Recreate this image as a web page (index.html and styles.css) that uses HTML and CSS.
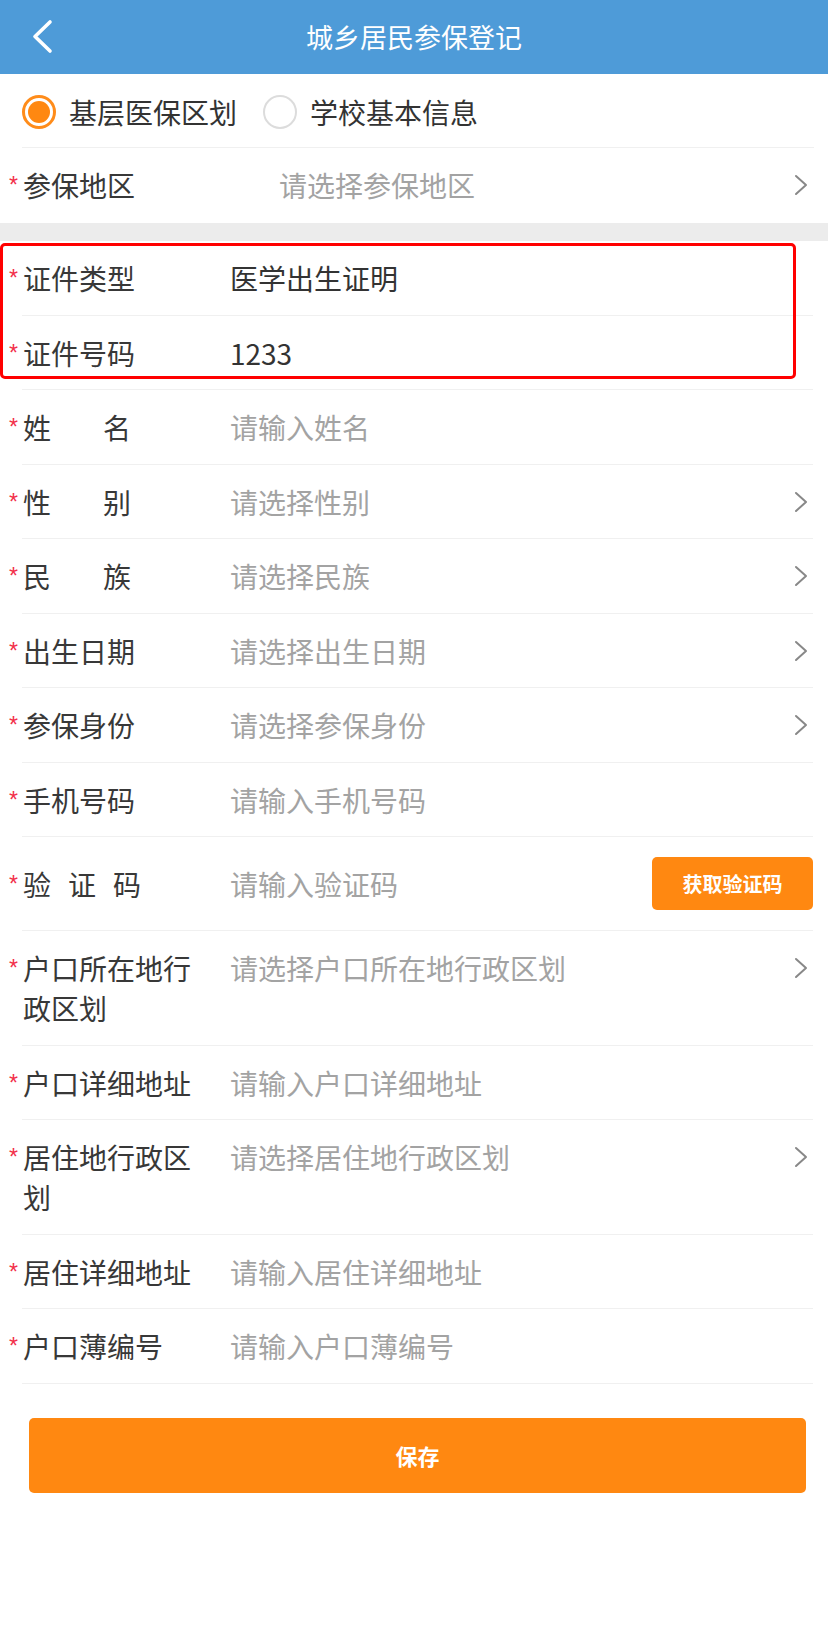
FILE: index.html
```html
<!DOCTYPE html>
<html lang="zh-CN">
<head>
<meta charset="utf-8">
<title>城乡居民参保登记</title>
<link rel="stylesheet" href="styles.css">
</head>
<body>
<header class="topbar">
  <div class="back">
    <svg width="26" height="38" viewBox="0 0 26 38"><path d="M20 4 L5 18.5 L20 33" fill="none" stroke="#fff" stroke-width="3.6" stroke-linecap="round" stroke-linejoin="round"/></svg>
  </div>
  <h1 class="title">城乡居民参保登记</h1>
  <div class="spacer"></div>
</header>

<section class="group">
  <div class="radio-row">
    <label class="radio checked"><span class="dot"></span><span class="rtext">基层医保区划</span></label>
    <label class="radio"><span class="dot"></span><span class="rtext">学校基本信息</span></label>
  </div>
  <div class="cell cell-area">
    <span class="req">*</span>
    <span class="label label-wide">参保地区</span>
    <span class="value ph">请选择参保地区</span>
    <svg class="arrow" width="16" height="24" viewBox="0 0 16 24"><path d="M3 3 L13 12 L3 21" fill="none" stroke="#888" stroke-width="2" stroke-linecap="round" stroke-linejoin="round"/></svg>
  </div>
</section>

<div class="band"></div>

<section class="group form">
  <div class="annot"></div>
  <div class="cell">
    <span class="req">*</span><span class="label">证件类型</span>
    <span class="value">医学出生证明</span>
  </div>
  <div class="cell">
    <span class="req">*</span><span class="label">证件号码</span>
    <span class="value">1233</span>
  </div>
  <div class="cell">
    <span class="req">*</span><span class="label"><span>姓</span><span class="gap2">名</span></span>
    <span class="value ph">请输入姓名</span>
  </div>
  <div class="cell">
    <span class="req">*</span><span class="label"><span>性</span><span class="gap2">别</span></span>
    <span class="value ph">请选择性别</span>
    <svg class="arrow" width="16" height="24" viewBox="0 0 16 24"><path d="M3 3 L13 12 L3 21" fill="none" stroke="#888" stroke-width="2" stroke-linecap="round" stroke-linejoin="round"/></svg>
  </div>
  <div class="cell">
    <span class="req">*</span><span class="label"><span>民</span><span class="gap2">族</span></span>
    <span class="value ph">请选择民族</span>
    <svg class="arrow" width="16" height="24" viewBox="0 0 16 24"><path d="M3 3 L13 12 L3 21" fill="none" stroke="#888" stroke-width="2" stroke-linecap="round" stroke-linejoin="round"/></svg>
  </div>
  <div class="cell">
    <span class="req">*</span><span class="label">出生日期</span>
    <span class="value ph">请选择出生日期</span>
    <svg class="arrow" width="16" height="24" viewBox="0 0 16 24"><path d="M3 3 L13 12 L3 21" fill="none" stroke="#888" stroke-width="2" stroke-linecap="round" stroke-linejoin="round"/></svg>
  </div>
  <div class="cell">
    <span class="req">*</span><span class="label">参保身份</span>
    <span class="value ph">请选择参保身份</span>
    <svg class="arrow" width="16" height="24" viewBox="0 0 16 24"><path d="M3 3 L13 12 L3 21" fill="none" stroke="#888" stroke-width="2" stroke-linecap="round" stroke-linejoin="round"/></svg>
  </div>
  <div class="cell">
    <span class="req">*</span><span class="label">手机号码</span>
    <span class="value ph">请输入手机号码</span>
  </div>
  <div class="cell cell-code">
    <span class="req">*</span><span class="label"><span>验</span><span class="gap1">证</span><span class="gap1">码</span></span>
    <span class="value ph">请输入验证码</span>
    <button class="code-btn">获取验证码</button>
  </div>
  <div class="cell">
    <span class="req">*</span><span class="label">户口所在地行政区划</span>
    <span class="value ph">请选择户口所在地行政区划</span>
    <svg class="arrow" width="16" height="24" viewBox="0 0 16 24"><path d="M3 3 L13 12 L3 21" fill="none" stroke="#888" stroke-width="2" stroke-linecap="round" stroke-linejoin="round"/></svg>
  </div>
  <div class="cell">
    <span class="req">*</span><span class="label">户口详细地址</span>
    <span class="value ph">请输入户口详细地址</span>
  </div>
  <div class="cell">
    <span class="req">*</span><span class="label">居住地行政区划</span>
    <span class="value ph">请选择居住地行政区划</span>
    <svg class="arrow" width="16" height="24" viewBox="0 0 16 24"><path d="M3 3 L13 12 L3 21" fill="none" stroke="#888" stroke-width="2" stroke-linecap="round" stroke-linejoin="round"/></svg>
  </div>
  <div class="cell">
    <span class="req">*</span><span class="label">居住详细地址</span>
    <span class="value ph">请输入居住详细地址</span>
  </div>
  <div class="cell">
    <span class="req">*</span><span class="label">户口薄编号</span>
    <span class="value ph">请输入户口薄编号</span>
  </div>
</section>

<div class="actions">
  <button class="save-btn">保存</button>
</div>
</body>
</html>
```

FILE: styles.css
```css
* { box-sizing: border-box; }

html, body {
  margin: 0;
  padding: 0;
  background: #fff;
  font-family: "Noto Sans CJK SC", "Noto Sans", sans-serif;
  color: #333;
}

.topbar {
  height: 74px;
  background: #4e9bd8;
  display: grid;
  grid-template-columns: 74px 1fr 74px;
  align-items: center;
}

.back {
  padding-left: 30px;
  display: flex;
  align-items: center;
  height: 74px;
}

.title {
  margin: 0;
  text-align: center;
  color: #fff;
  font-size: 27px;
  font-weight: 400;
  line-height: 74px;
}

.group { background: #fff; }

.radio-row {
  height: 74px;
  margin: 0 14px 0 22px;
  border-bottom: 1px solid #f0f0f0;
  display: flex;
  align-items: center;
  padding-top: 2px;
}

.radio {
  display: flex;
  align-items: center;
  margin-right: 26px;
}

.radio .dot {
  width: 34px;
  height: 34px;
  border-radius: 50%;
  border: 2px solid #dcdcdc;
  margin-right: 13px;
}

.radio.checked .dot {
  border: 3px solid #ff8c1a;
  padding: 3px;
  background: #ff8811;
  background-clip: content-box;
}

.rtext {
  font-size: 28px;
  line-height: 40px;
  color: #333;
}

.band {
  height: 18px;
  background: #ececec;
}

.form { position: relative; }

.annot {
  position: absolute;
  left: 0;
  top: 2px;
  width: 796px;
  height: 136px;
  border: 3px solid #ff0000;
  border-radius: 5px;
  pointer-events: none;
  z-index: 2;
}

.cell {
  display: flex;
  align-items: flex-start;
  margin: 0 15px 0 22px;
  padding: 17px 0 16.5px 0;
  border-bottom: 1px solid #f0f0f0;
}

.cell-area {
  border-bottom: none;
  padding: 17px 0 18px 0;
}

.req {
  width: 13px;
  margin-left: -13px;
  color: #f2304a;
  font-family: "Liberation Sans", sans-serif;
  font-size: 23px;
  line-height: 40px;
  flex: none;
}

.label {
  width: 186px;
  flex: none;
  padding-left: 1px;
  font-size: 28px;
  line-height: 40px;
  color: #383838;
  display: block;
}

.label-wide { width: 235px; }

.gap2 { margin-left: 52px; }
.gap1 { margin-left: 17px; }

.value {
  flex: 1;
  margin-left: 22px;
  font-size: 28px;
  line-height: 40px;
  color: #333;
}

.value.ph { color: #a3a3a3; }

.arrow {
  flex: none;
  margin-top: 8px;
  margin-right: 4px;
}

.cell-code {
  align-items: center;
  padding: 20px 0;
}

.code-btn {
  flex: none;
  width: 161px;
  height: 53px;
  border: none;
  border-radius: 5px;
  background: #ff8811;
  color: #fff;
  font-family: "Noto Sans CJK SC", sans-serif;
  font-size: 20px;
  font-weight: 700;
  padding: 0;
}

.actions {
  padding: 34px 22px 0 29px;
}

.save-btn {
  display: block;
  width: 777px;
  height: 75px;
  border: none;
  border-radius: 5px;
  background: #ff8811;
  color: #fff;
  font-family: "Noto Sans CJK SC", sans-serif;
  font-size: 22px;
  font-weight: 700;
  padding: 0;
}
```
